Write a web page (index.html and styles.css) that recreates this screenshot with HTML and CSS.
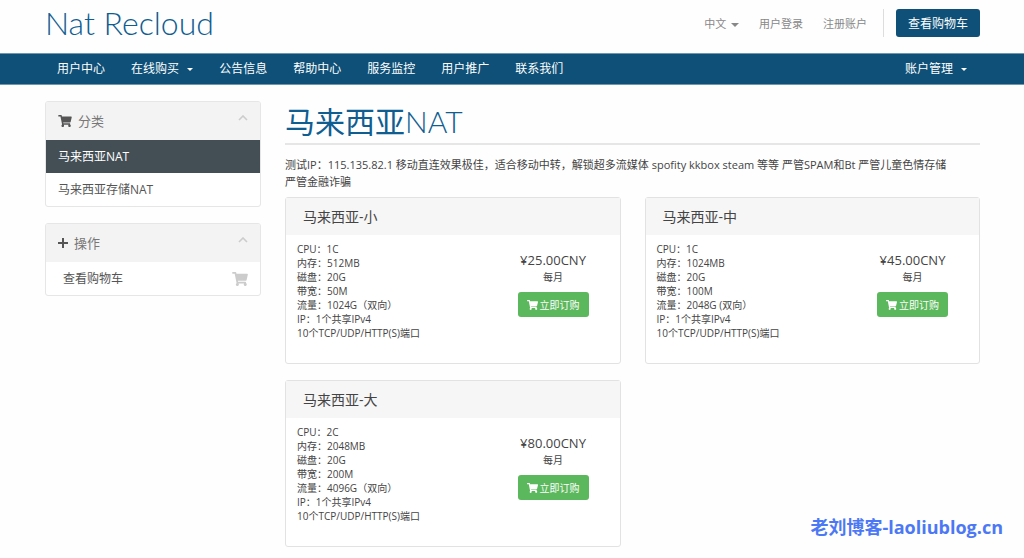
FILE: index.html
```html
<!DOCTYPE html>
<html lang="zh-CN">
<head>
    <meta charset="utf-8">
    <meta name="viewport" content="width=device-width, initial-scale=1.0">
    <title>马来西亚NAT - Nat Recloud</title>
    <link rel="stylesheet" href="styles.css">
</head>
<body>
    <svg class="sprite" aria-hidden="true">
        <symbol id="cart" viewBox="0 0 576 512">
            <path d="M528.12 301.319l47.273-208C578.806 78.301 567.391 64 551.99 64H159.208l-9.166-44.81C147.758 8.021 137.93 0 126.529 0H24C10.745 0 0 10.745 0 24v16c0 13.255 10.745 24 24 24h69.883l70.248 343.435C147.325 417.1 136 435.222 136 456c0 30.928 25.072 56 56 56s56-25.072 56-56c0-15.674-6.447-29.835-16.824-40h209.647C430.447 426.165 424 440.326 424 456c0 30.928 25.072 56 56 56s56-25.072 56-56c0-22.172-12.888-41.332-31.579-50.405l5.517-24.276c3.413-15.018-8.002-29.319-23.403-29.319H218.117l-6.545-32h293.145c11.206 0 20.92-7.754 23.403-18.681z"/>
        </symbol>
        <symbol id="plus" viewBox="0 0 10 10">
            <path d="M4 0h2v4h4v2H6v4H4V6H0V4h4z"/>
        </symbol>
        <symbol id="chevron" viewBox="0 0 10 6">
            <path d="M1 5l4-4 4 4" fill="none" stroke="currentColor" stroke-width="1.6"/>
        </symbol>
    </svg>

    <header class="header container">
        <a class="logo" href="#">Nat Recloud</a>
        <ul class="top-nav">
            <li><a href="#">中文 <span class="caret"></span></a></li>
            <li><a href="#">用户登录</a></li>
            <li><a href="#">注册账户</a></li>
            <li class="primary-action"><button type="button" class="btn-cart">查看购物车</button></li>
        </ul>
    </header>

    <nav class="main-menu">
        <div class="container menu-inner">
            <a href="#">用户中心</a>
            <a href="#">在线购买 <span class="caret"></span></a>
            <a href="#">公告信息</a>
            <a href="#">帮助中心</a>
            <a href="#">服务监控</a>
            <a href="#">用户推广</a>
            <a href="#">联系我们</a>
            <a class="account" href="#">账户管理 <span class="caret"></span></a>
        </div>
    </nav>

    <div class="container layout">
        <aside class="sidebar">
            <section class="panel">
                <div class="panel-heading">
                    <svg class="icon-cart"><use href="#cart"/></svg>
                    <h3>分类</h3>
                    <button type="button" class="minimise" aria-label="收起分类"><svg><use href="#chevron"/></svg></button>
                </div>
                <a class="list-item active" href="#">马来西亚NAT</a>
                <a class="list-item" href="#">马来西亚存储NAT</a>
            </section>
            <section class="panel">
                <div class="panel-heading">
                    <svg class="icon-plus"><use href="#plus"/></svg>
                    <h3>操作</h3>
                    <button type="button" class="minimise" aria-label="收起操作"><svg><use href="#chevron"/></svg></button>
                </div>
                <a class="list-item with-icon" href="#">查看购物车 <svg><use href="#cart"/></svg></a>
            </section>
        </aside>

        <main class="content">
            <h1>马来西亚<span class="thin">NAT</span></h1>
            <p class="tagline">测试IP：115.135.82.1 移动直连效果极佳，适合移动中转，解锁超多流媒体 spofity kkbox steam 等等 严管SPAM和Bt 严管儿童色情存储<br>严管金融诈骗</p>

            <div class="products">
                <article class="product">
                    <h2>马来西亚-小</h2>
                    <div class="product-body">
                        <p class="desc">CPU：1C<br>内存：512MB<br>磁盘：20G<br>带宽：50M<br>流量：1024G（双向）<br>IP：1个共享IPv4<br>10个TCP/UDP/HTTP(S)端口</p>
                        <div class="pricing">
                            <span class="price">¥25.00CNY</span>
                            <span>每月</span>
                            <button type="button" class="btn-order"><svg><use href="#cart"/></svg>立即订购</button>
                        </div>
                    </div>
                </article>
                <article class="product">
                    <h2>马来西亚-中</h2>
                    <div class="product-body">
                        <p class="desc">CPU：1C<br>内存：1024MB<br>磁盘：20G<br>带宽：100M<br>流量：2048G (双向）<br>IP：1个共享IPv4<br>10个TCP/UDP/HTTP(S)端口</p>
                        <div class="pricing">
                            <span class="price">¥45.00CNY</span>
                            <span>每月</span>
                            <button type="button" class="btn-order"><svg><use href="#cart"/></svg>立即订购</button>
                        </div>
                    </div>
                </article>
                <article class="product">
                    <h2>马来西亚-大</h2>
                    <div class="product-body">
                        <p class="desc">CPU：2C<br>内存：2048MB<br>磁盘：20G<br>带宽：200M<br>流量：4096G（双向）<br>IP：1个共享IPv4<br>10个TCP/UDP/HTTP(S)端口</p>
                        <div class="pricing">
                            <span class="price">¥80.00CNY</span>
                            <span>每月</span>
                            <button type="button" class="btn-order"><svg><use href="#cart"/></svg>立即订购</button>
                        </div>
                    </div>
                </article>
            </div>
        </main>
    </div>

    <div class="watermark">老刘博客-laoliublog.cn</div>
</body>
</html>
```
FILE: styles.css
```css
* {
    box-sizing: border-box;
}

body {
    margin: 0;
    background: #fefefe;
    color: #444;
    font-family: "Open Sans", "Noto Sans CJK SC", sans-serif;
    font-size: 12px;
    line-height: 17px;
}

h1, h2, h3, p, ul {
    margin: 0;
    padding: 0;
    font-weight: 400;
}

a {
    color: inherit;
    text-decoration: none;
}

button {
    border: 0;
    padding: 0;
    font-family: inherit;
    cursor: pointer;
}

svg {
    display: block;
    fill: currentColor;
}

.sprite {
    display: none;
}

.container {
    padding: 0 44px 0 45px;
}

.caret {
    display: inline-block;
    margin-left: 5px;
    border: 3px solid transparent;
    border-top-color: currentColor;
    border-bottom: 0;
    vertical-align: middle;
}

/* Header */
.header {
    display: flex;
    justify-content: space-between;
    align-items: center;
    height: 53px;
    padding-bottom: 7px;
}

.logo {
    color: #0f5d91;
    font-family: Lato, "Open Sans", sans-serif;
    font-size: 32px;
    font-weight: 300;
    line-height: 40px;
}

.top-nav {
    display: flex;
    align-items: center;
    gap: 20px;
    list-style: none;
    color: #888;
    font-size: 11px;
}

.top-nav .caret {
    margin-left: 2px;
    border-width: 4px 4px 0;
}

.primary-action {
    margin-left: -4px;
    padding-left: 12px;
    border-left: 1px solid #ddd;
}

.btn-cart {
    display: block;
    width: 84px;
    height: 28px;
    border-radius: 3px;
    background: #0e5077;
    color: #fff;
    font-size: 12px;
}

/* Main menu */
.main-menu {
    background: #0e5077;
    border: 1px solid #6d97b0;
    border-width: 1px 0;
    color: #fff;
}

.menu-inner {
    display: flex;
    gap: 26px;
    padding-left: 57px;
    padding-right: 57px;
    line-height: 30px;
}

.account {
    margin-left: auto;
}

/* Sidebar */
.layout {
    display: flex;
    gap: 24px;
    padding-top: 16px;
}

.sidebar {
    flex: 0 0 216px;
}

.panel {
    margin-bottom: 16px;
    border: 1px solid #e6e6e6;
    border-radius: 3px;
    overflow: hidden;
    background: #fff;
    color: #555;
}

.panel-heading {
    display: flex;
    align-items: center;
    height: 38px;
    padding: 0 12px;
    background: #f3f3f3;
}

.panel-heading h3 {
    color: #777;
    font-size: 13px;
}

.icon-cart {
    width: 14px;
    height: 12px;
    margin-right: 6px;
}

.icon-plus {
    width: 10px;
    height: 10px;
    margin-right: 6px;
}

.minimise {
    margin-left: auto;
    padding-bottom: 6px;
    background: none;
    color: #ccc;
}

.minimise svg {
    width: 10px;
    height: 6px;
}

.list-item {
    display: flex;
    align-items: center;
    height: 33px;
    padding: 0 12px;
}

.list-item.active {
    background: #444f55;
    color: #fff;
}

.with-icon {
    justify-content: space-between;
    padding-left: 17px;
}

.with-icon svg {
    width: 16px;
    height: 14px;
    color: #ccc;
}

/* Products */
.content {
    flex: 1;
    min-width: 0;
}

h1 {
    padding-bottom: 2px;
    border-bottom: 2px solid #e6e6e6;
    color: #0f5d91;
    font-family: Lato, "Noto Sans CJK SC", sans-serif;
    font-size: 30px;
    line-height: 40px;
}

.thin {
    font-weight: 300;
}

.tagline {
    padding: 11px 0 7px;
    font-size: 11px;
}

.products {
    display: grid;
    grid-template-columns: 1fr 1fr;
    gap: 16px 24px;
}

.product {
    border: 1px solid #e2e2e2;
    border-radius: 3px;
    background: #fff;
}

.product h2 {
    padding: 0 17px;
    background: #f6f6f6;
    font-size: 14px;
    line-height: 37px;
}

.product-body {
    display: flex;
    justify-content: space-between;
    padding: 7px 31px 23px 11px;
    font-size: 10px;
    line-height: 14px;
}

.pricing {
    display: flex;
    flex-direction: column;
    align-items: center;
    padding-top: 10px;
}

.price {
    margin-bottom: 1px;
    font-size: 13px;
    line-height: 17px;
}

.btn-order {
    display: flex;
    align-items: center;
    justify-content: center;
    gap: 2px;
    width: 71px;
    height: 25px;
    margin-top: 8px;
    border-radius: 3px;
    background: #5cb85c;
    color: #fff;
    font-size: 10px;
}

.btn-order svg {
    width: 11px;
    height: 10px;
}

.watermark {
    position: absolute;
    right: 21px;
    top: 516px;
    color: #4c78f5;
    font-size: 18px;
    font-weight: 700;
    line-height: 22px;
}
```
